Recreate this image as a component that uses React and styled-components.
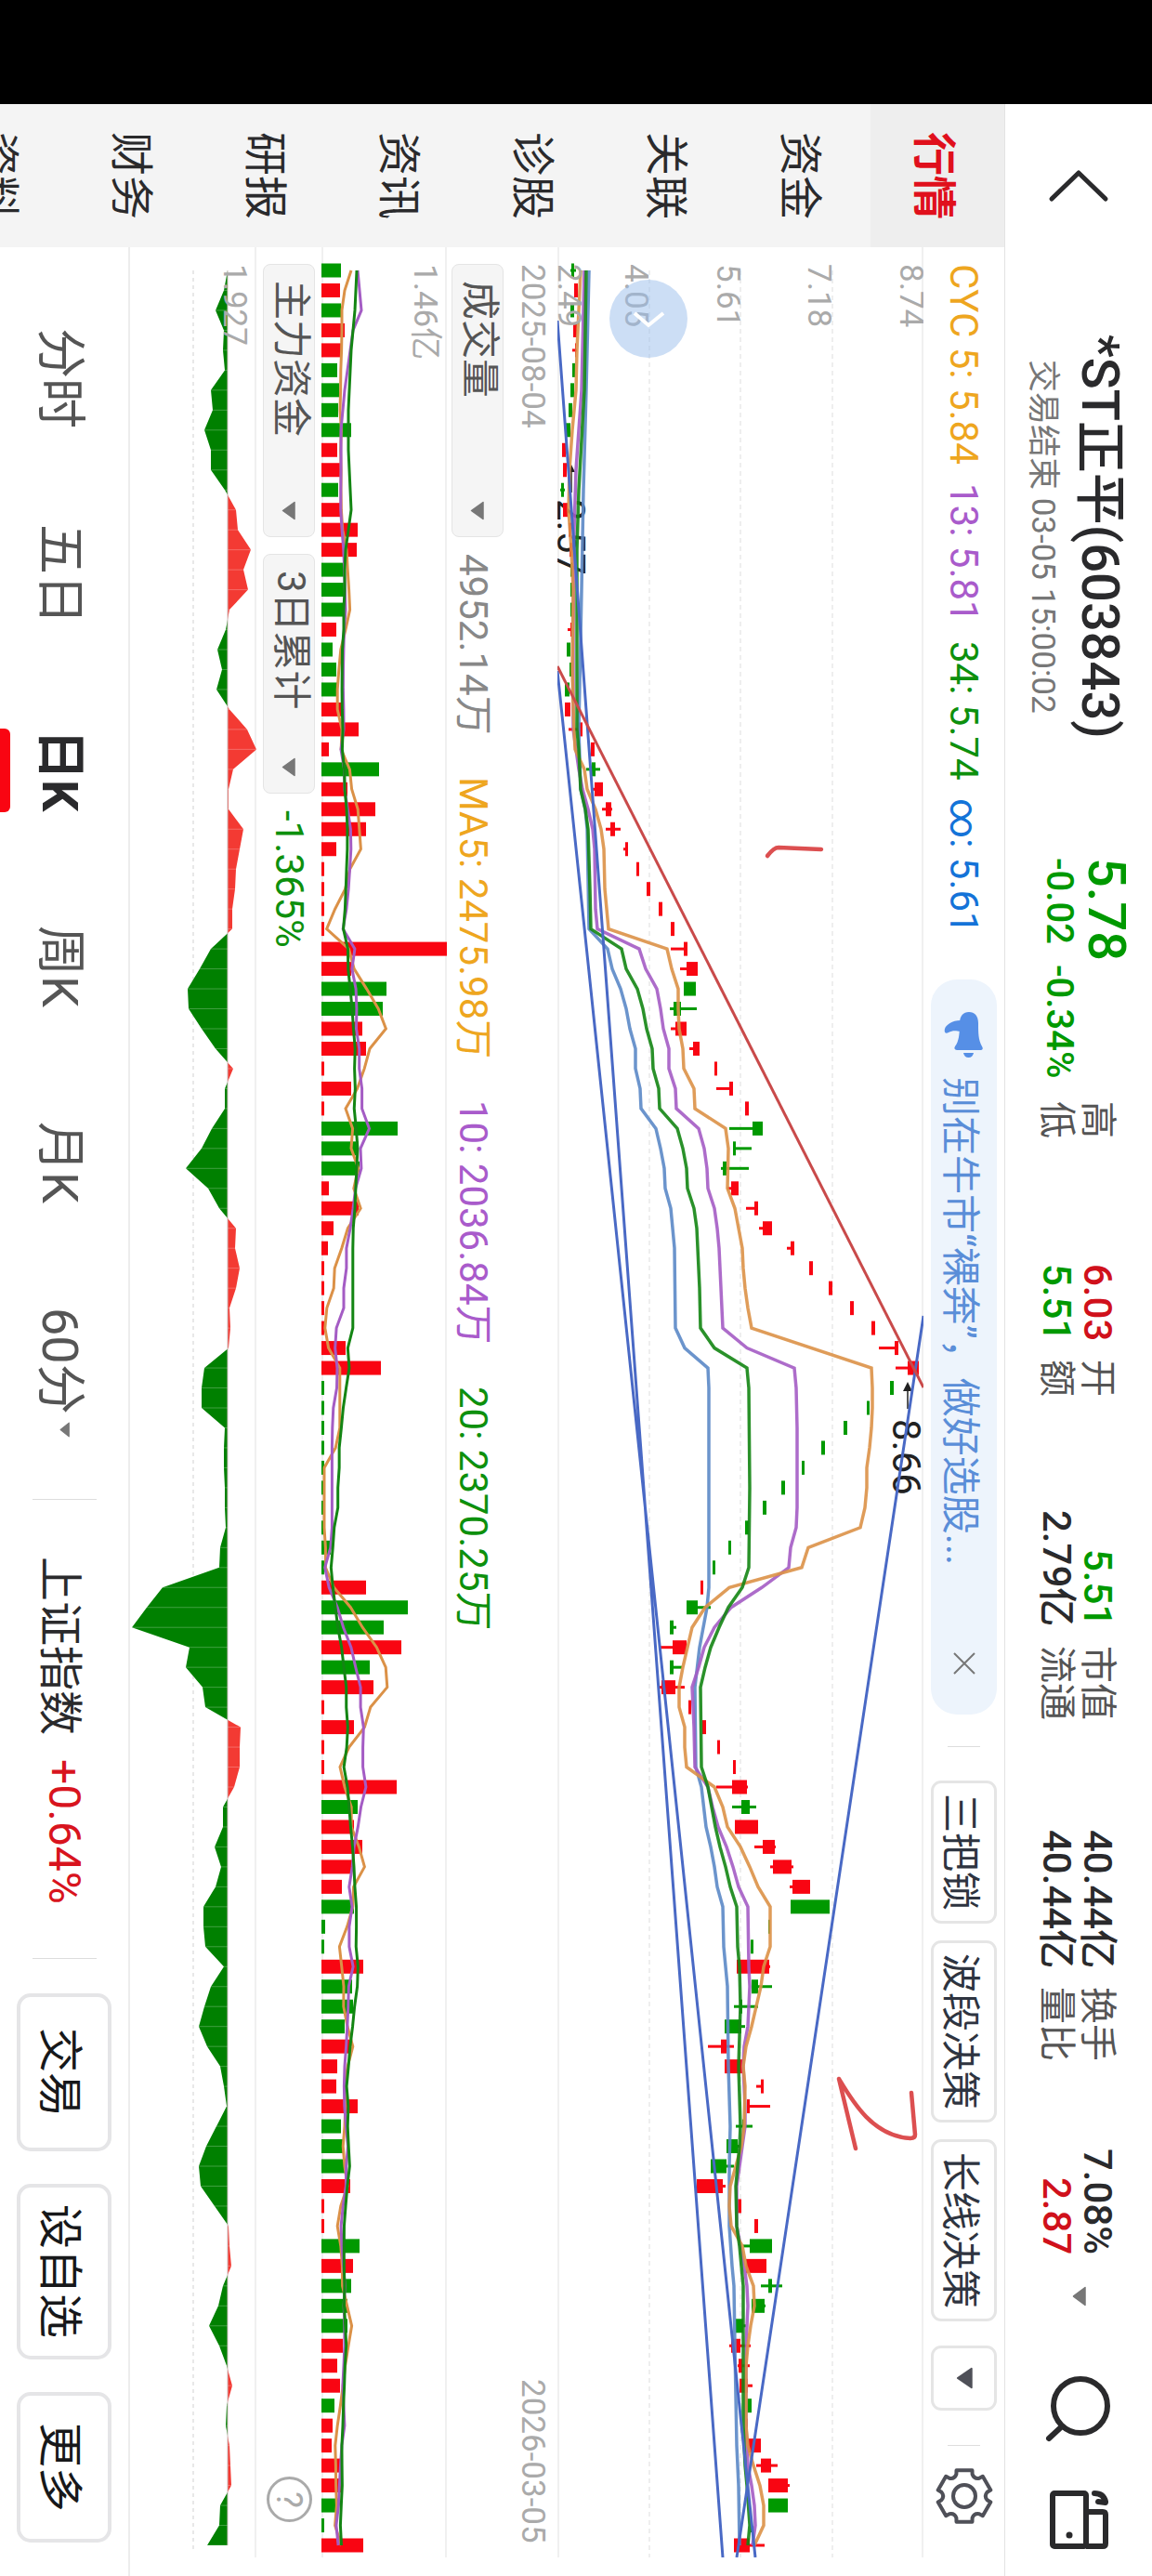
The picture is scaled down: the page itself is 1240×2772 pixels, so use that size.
import React from 'react'
import styled, { createGlobalStyle } from 'styled-components'

const GREEN = '#009900'
const RED = '#f90512'

const GlobalStyle = createGlobalStyle`
  * {
    box-sizing: border-box;
  }
  body {
    margin: 0;
    background: #fff;
    font-family: Roboto, 'Noto Sans CJK SC', sans-serif;
  }
  button, select {
    margin: 0;
    padding: 0;
    border: 0;
    background: none;
    color: inherit;
    font: inherit;
    writing-mode: inherit;
    text-orientation: inherit;
    white-space: nowrap;
    cursor: pointer;
  }
  svg {
    display: block;
    flex: none;
    writing-mode: horizontal-tb;
  }
`

// the phone is held sideways: inline runs down, block runs right to left
const Phone = styled.div`
  display: flex;
  writing-mode: vertical-rl;
  text-orientation: sideways;
  width: 100%;
  height: 100vh;
  overflow: hidden;
  white-space: nowrap;
  color: #2a2a2c;
`

const Notch = styled.div`
  flex: none;
  inline-size: 112px;
  background: #000;
`

const Screen = styled.div`
  flex: 1;
  min-inline-size: 0;
  display: flex;
  flex-direction: column;
`

const Header = styled.header`
  display: flex;
  align-items: center;
  flex: none;
  block-size: 159px;
  padding-inline-end: 28px;
  border-block-end: 1px solid #e3e3e3;
`

const BackButton = styled.button`
  display: flex;
  align-items: center;
  justify-content: center;
  inline-size: 176px;
  block-size: 100%;
`

const IconButton = styled.button`
  display: flex;
  align-items: center;
  flex: none;
  margin-inline-start: ${(p) => p.$gap || 0}px;
`

const Title = styled.div`
  margin-inline-start: 72px;
  padding-block-start: 10px;
  text-align: center;
`

const Name = styled.h1`
  margin: 0;
  font-size: 56px;
  font-weight: 500;
  line-height: 68px;
`

const Status = styled.div`
  font-size: 35px;
  line-height: 56px;
  color: #777;
`

const Price = styled.div`
  inline-size: 240px;
  margin-inline: 128px 22px;
  padding-block-end: 16px;
  color: ${GREEN};
  font-weight: 500;
`

const Last = styled.div`
  font-size: 56px;
  line-height: 58px;
`

const Change = styled.div`
  display: flex;
  gap: 22px;
  font-size: 40px;
  line-height: 44px;
`

const Stats = styled.dl`
  flex: 1;
  display: grid;
  grid-template-columns: 26fr 29fr 35fr 29fr;
  column-gap: 20px;
  margin: 0;
  padding-block-start: 4px;
`

const Stat = styled.div`
  display: flex;
  justify-content: space-between;
  line-height: 44px;
`

const StatLabel = styled.dt`
  font-size: 40px;
  color: #555;
`

const StatValue = styled.dd`
  margin: 0;
  font-size: 42px;
  font-weight: 500;
  color: ${(p) => p.$color || '#2a2a2c'};
`

const Body = styled.div`
  flex: 1;
  min-block-size: 0;
  display: flex;
`

const SideTabs = styled.nav`
  flex: none;
  display: flex;
  flex-direction: column;
  inline-size: 154px;
  overflow: hidden;
  background: #f4f4f4;
`

const SideTab = styled.button`
  flex: none;
  block-size: 144px;
  font-size: 47px;
  font-weight: ${(p) => (p.$active ? 700 : 400)};
  color: ${(p) => (p.$active ? '#e0101c' : '#2a2a2c')};
  background: ${(p) => (p.$active ? '#eee' : 'transparent')};
`

const Content = styled.main`
  flex: 1;
  min-inline-size: 0;
  display: flex;
  flex-direction: column;
`

const Bar = styled.div`
  flex: none;
  display: flex;
  align-items: center;
  block-size: ${(p) => p.$size}px;
  padding-inline: 18px ${(p) => p.$end || 20}px;
  font-size: 42px;
`

const Legend = styled.div`
  display: flex;
  gap: 20px;
`

const Tinted = styled.span`
  color: ${(p) => p.$color};
`

const Notice = styled.div`
  display: flex;
  align-items: center;
  inline-size: 791px;
  block-size: 71px;
  margin-inline-start: auto;
  padding-inline: 35px 42px;
  border-radius: 28px;
  background: #edf4fc;
  color: #5a8ed8;
`

const NoticeText = styled.span`
  flex: 1;
  margin-inline-start: 20px;
`

const Divider = styled.span`
  flex: none;
  inline-size: 1px;
  block-size: ${(p) => p.$size}px;
  margin-inline: ${(p) => p.$before}px ${(p) => p.$after}px;
  background: #ddd;
`

const Chip = styled.button`
  flex: none;
  display: flex;
  align-items: center;
  justify-content: center;
  block-size: 71px;
  min-inline-size: 70px;
  margin-inline: ${(p) => p.$gap || 0}px 18px;
  padding-inline: 11px;
  border: 3px solid #e5e5e5;
  border-radius: 11px;
  color: #2e3440;
`

const ChartPane = styled.section`
  ${(p) => (p.$size ? `flex: none; block-size: ${p.$size}px;` : 'flex: 1; min-block-size: 0;')}
  margin-inline-end: 20px;
  box-shadow: inset -2px 0 #f0f0f0${(p) => (p.$last ? '' : ', inset 2px 0 #f0f0f0')};
  svg {
    width: 100%;
    height: 100%;
  }
`

const DateRow = styled.div`
  flex: none;
  display: flex;
  justify-content: space-between;
  align-items: center;
  block-size: 54px;
  padding-inline: 18px 35px;
  font-size: 35px;
  color: #aaa;
`

const SelectBox = styled.label`
  position: relative;
  display: block;
  flex: none;
  inline-size: ${(p) => p.$length}px;
  block-size: 56px;
  margin-inline-end: 18px;
  select {
    appearance: none;
    inline-size: 100%;
    block-size: 100%;
    padding-inline: 17px 40px;
    border: 1px solid #e4e4e4;
    border-radius: 8px;
    background: #f5f5f5;
    color: #555;
  }
  svg {
    position: absolute;
    bottom: 18px;
    left: 20px;
    pointer-events: none;
  }
`

const Averages = styled.div`
  display: flex;
  gap: 45px;
`

const HelpButton = styled.button`
  margin-inline: auto 38px;
  inline-size: 49px;
  block-size: 49px;
  border: 3px solid #aaa;
  border-radius: 50%;
  color: #aaa;
  font-size: 38px;
  line-height: 42px;
`

const BottomBar = styled.footer`
  flex: none;
  display: flex;
  align-items: center;
  block-size: 140px;
  padding-inline: 86px 35px;
  border-block-start: 2px solid #ededed;
  font-size: 54px;
`

const Periods = styled.nav`
  display: flex;
  gap: 101px;
  block-size: 100%;
`

const Period = styled.button`
  position: relative;
  display: flex;
  align-items: center;
  justify-content: center;
  gap: 8px;
  min-inline-size: 110px;
  color: ${(p) => (p.$active ? '#2a2a2c' : '#555')};
  font-weight: ${(p) => (p.$active ? 700 : 400)};
  &::after {
    content: '';
    display: ${(p) => (p.$active ? 'block' : 'none')};
    position: absolute;
    inset-inline: 10px;
    inset-block-end: 0;
    block-size: 11px;
    border-radius: 0 6px 6px 0;
    background: ${RED};
  }
`

const Index = styled.div`
  display: flex;
  align-items: center;
  gap: 26px;
  font-size: 48px;
`

const ActionButton = styled.button`
  flex: none;
  inline-size: ${(p) => p.$length}px;
  block-size: 102px;
  border: 4px solid #e5e5e7;
  border-radius: 15px;
  font-size: 48px;
  color: #17181a;
`

const Actions = styled.div`
  flex: none;
  display: flex;
  gap: 35px;
`

// ---------- icons ----------

const Caret = ({ width = 15, height = 21, color = '#777' }) => (
  <svg width={width} height={height} viewBox="0 0 15 21" preserveAspectRatio="none">
    <path d="M14 1.5V19.5L1.5 10.5Z" fill={color} stroke={color} strokeWidth="1.5" strokeLinejoin="round" />
  </svg>
)

const BackIcon = () => (
  <svg width="66" height="36" viewBox="0 0 66 36" fill="none" stroke="#2a2a2c">
    <path d="M4 32L33 4L62 32" strokeWidth="5" strokeLinecap="round" strokeLinejoin="round" />
  </svg>
)

const SearchIcon = () => (
  <svg width="72" height="76" viewBox="0 0 72 76" fill="none" stroke="#2a2a2c" strokeWidth="6">
    <circle cx="38" cy="34" r="29" />
    <path d="M18 56L4 69" strokeLinecap="round" />
  </svg>
)

const WindowIcon = () => (
  <svg width="63" height="65" viewBox="0 0 63 65" fill="none" stroke="#2a2a2c" strokeWidth="6">
    <rect x="3" y="4" width="36" height="57" rx="2" />
    <path d="M39 24H57Q60 24 60 27V58Q60 61 57 61H39" />
    <path d="M48 4Q58 4 60 13M52 13L60 14" strokeLinecap="round" />
    <circle cx="21" cy="49" r="3.5" fill="#2a2a2c" stroke="none" />
  </svg>
)

const BellIcon = () => (
  <svg width="43" height="50" viewBox="0 0 43 50" fill="#568fe6">
    <path d="M17 12C17 4 21 0 27 0S37 4 37 12C37 22 37 30 41 37Q43 40 40 41H14Q10 40 12 37C16 32 17 24 17 12Z" />
    <path d="M18 9C9 9 2 14 1 18C0 22 2 24 5 22C9 20 12 20 18 21Z" />
    <path d="M21 44H32Q31 49 26.500 49T21 44Z" />
  </svg>
)

const CloseIcon = () => (
  <svg width="26" height="26" viewBox="0 0 26 26" stroke="#777" strokeWidth="2">
    <path d="M2 2L24 24M24 2L2 24" />
  </svg>
)

const polar = (r, deg) => {
  const a = (deg * Math.PI) / 180
  return `${(31 + r * Math.cos(a)).toFixed(1)} ${(31 + r * Math.sin(a)).toFixed(1)}`
}

const gear = [0, 1, 2, 3, 4, 5]
  .map((k) => {
    const a = k * 60 - 90
    return [
      `${k ? 'L' : 'M'}${polar(29, a - 17)}`,
      `L${polar(29, a + 17)}`,
      `L${polar(25, a + 20)}`,
      `Q${polar(21, a + 30)} ${polar(25, a + 40)}`
    ].join('')
  })
  .join('')

const GearIcon = () => (
  <svg width="62" height="62" viewBox="0 0 62 62" fill="none" stroke="#4f5058" strokeWidth="4" strokeLinejoin="round">
    <path d={`${gear}Z`} />
    <circle cx="31" cy="31" r="12" />
  </svg>
)

// ---------- chart data ----------

const STEP = 2448 / 114
const at = (i) => 291 + i * STEP

// body start, body end, wick start, wick end
const candles = [
  ['G', 615, 618, 614, 620], ['R', 618, 622], ['G', 614, 618], ['R', 617, 621], ['R', 619, 620, 616, 621],
  ['G', 616, 619], ['G', 614, 618], ['G', 612, 616], ['G', 608, 614], ['R', 605, 609],
  ['R', 606, 610], ['G', 604, 607, 603, 608], ['R', 606, 611], ['R', 612, 615], ['R', 613, 616],
  ['G', 614, 617], ['G', 614, 617], ['G', 614, 617], ['R', 614, 615, 611, 616], ['G', 610, 614],
  ['G', 613, 616], ['G', 608, 613], ['R', 608, 614], ['R', 623, 627, 612, 627], ['R', 636, 640],
  ['G', 637, 641, 631, 646], ['R', 640, 649, 638, 649], ['R', 652, 658, 648, 659], ['R', 657, 662, 652, 668], ['R', 673, 676, 671, 676],
  ['R', 685, 688], ['R', 696, 700], ['R', 709, 713], ['R', 722, 726], ['R', 736, 740, 722, 740],
  ['R', 739, 751, 732, 751], ['G', 736, 749], ['G', 725, 733, 721, 750], ['R', 727, 739, 722, 739], ['R', 746, 753, 742, 753],
  ['R', 769, 772], ['R', 785, 789, 771, 789], ['R', 802, 806], ['G', 810, 821, 785, 821], ['G', 789, 792, 789, 809],
  ['G', 778, 782, 776, 806], ['R', 787, 795, 783, 795], ['R', 812, 816, 803, 816], ['R', 821, 831, 817, 831], ['R', 851, 855, 847, 855],
  ['R', 871, 875], ['R', 892, 896], ['R', 915, 919], ['R', 938, 942], ['R', 963, 967, 946, 967],
  ['R', 977, 989, 964, 989], ['G', 958, 962], ['G', 933, 936], ['G', 908, 912], ['G', 884, 888],
  ['G', 863, 866], ['G', 841, 845], ['G', 821, 825], ['G', 802, 806], ['G', 784, 787],
  ['G', 767, 770], ['R', 754, 757], ['G', 739, 751, 739, 765], ['G', 721, 725, 721, 728], ['R', 724, 739, 711, 739],
  ['G', 721, 725, 721, 734], ['R', 712, 727, 710, 737], ['R', 741, 744], ['R', 756, 760], ['R', 772, 775],
  ['R', 789, 792], ['R', 788, 804, 771, 805], ['G', 798, 807, 788, 814], ['R', 791, 816], ['R', 821, 834, 812, 835],
  ['R', 832, 852, 829, 854], ['R', 853, 872, 850, 872], ['G', 851, 893], ['G', 827, 829], ['G', 808, 811],
  ['R', 793, 828, 793, 829], ['G', 809, 816, 809, 831], ['G', 796, 799, 790, 816], ['G', 780, 798, 780, 802], ['R', 776, 782, 762, 790],
  ['R', 780, 800], ['R', 819, 822, 814, 822], ['R', 804, 807, 804, 829], ['G', 799, 801, 792, 810], ['G', 782, 794, 782, 796],
  ['G', 765, 782, 765, 790], ['R', 750, 778, 750, 781], ['R', 794, 798], ['R', 812, 816], ['G', 807, 831, 800, 831],
  ['R', 803, 825], ['G', 827, 831, 819, 842], ['G', 809, 823, 809, 824], ['G', 792, 800, 792, 803], ['R', 787, 797, 785, 808],
  ['R', 795, 799, 794, 807], ['R', 796, 805, 796, 810], ['G', 803, 809], ['R', 803, 805], ['R', 805, 819],
  ['R', 819, 830, 814, 837], ['R', 827, 848, 827, 850], ['G', 827, 848], ['G', 808, 810], ['R', 790, 807, 790, 823]
]

// day index, position
const costLines = [
  {
    color: '#5b88c7',
    points: [[0, 634], [6, 631], [11, 628], [16, 626], [23, 623], [26, 625], [27, 630], [28, 632], [33, 634], [34, 654], [35, 659], [36, 668], [37, 674], [38, 678], [39, 684], [40, 684], [41, 689], [42, 690], [43, 706], [44, 711], [45, 715], [46, 716], [47, 722], [48, 724], [49, 726], [53, 727], [54, 737], [55, 762], [56, 763], [66, 763], [67, 761], [69, 753], [71, 748], [75, 749], [76, 755], [78, 760], [79, 765], [80, 769], [81, 772], [82, 778], [84, 779], [86, 783], [90, 784], [93, 786], [95, 785], [98, 785], [100, 788], [101, 790], [104, 791], [109, 793], [111, 795], [114, 796]]
  },
  {
    color: '#a45cc4',
    points: [[0, 629], [6, 626], [10, 620], [13, 618], [18, 617], [23, 617], [24, 620], [25, 623], [26, 627], [27, 633], [28, 638], [29, 640], [32, 641], [33, 643], [34, 688], [35, 695], [36, 707], [37, 711], [38, 714], [39, 720], [40, 720], [41, 727], [42, 728], [43, 752], [44, 758], [45, 761], [46, 762], [47, 769], [48, 772], [49, 774], [51, 776], [53, 778], [54, 804], [55, 855], [56, 857], [58, 858], [62, 858], [63, 857], [64, 851], [65, 849], [66, 820], [67, 787], [68, 769], [69, 758], [70, 752], [71, 745], [73, 747], [75, 748], [76, 762], [77, 767], [78, 773], [79, 782], [80, 789], [81, 795], [82, 805], [85, 806], [86, 807], [88, 805], [89, 801], [90, 800], [92, 802], [93, 802], [94, 799], [95, 796], [96, 793], [98, 793], [99, 797], [100, 801], [101, 804], [102, 805], [104, 803], [108, 803], [110, 805], [111, 809], [112, 812], [113, 813], [114, 810]]
  },
  {
    color: '#db9147',
    points: [[0, 625], [4, 621], [6, 620], [8, 616], [10, 613], [12, 612], [14, 615], [16, 617], [20, 616], [22, 617], [24, 619], [25, 629], [26, 632], [27, 641], [28, 647], [29, 650], [31, 651], [32, 653], [33, 655], [34, 718], [35, 723], [36, 730], [37, 730], [38, 731], [39, 735], [40, 736], [41, 747], [42, 748], [43, 781], [44, 784], [46, 783], [47, 791], [48, 795], [49, 799], [50, 800], [51, 802], [52, 805], [53, 809], [55, 938], [56, 939], [57, 939], [58, 938], [59, 936], [60, 933], [61, 933], [62, 931], [63, 926], [64, 870], [65, 863], [66, 785], [67, 759], [68, 745], [69, 740], [70, 735], [71, 731], [72, 731], [73, 737], [74, 737], [75, 739], [76, 769], [77, 778], [78, 783], [79, 797], [80, 807], [81, 816], [82, 829], [84, 829], [85, 822], [86, 819], [87, 814], [88, 809], [89, 803], [90, 800], [91, 802], [93, 801], [94, 798], [95, 792], [96, 786], [97, 785], [98, 787], [99, 799], [100, 803], [101, 811], [102, 812], [103, 808], [104, 805], [105, 803], [108, 803], [109, 805], [110, 811], [111, 818], [112, 822], [113, 822], [114, 812]]
  },
  {
    color: '#138513',
    points: [[0, 631], [6, 629], [11, 623], [14, 621], [23, 621], [24, 623], [26, 625], [27, 630], [28, 633], [31, 635], [33, 636], [34, 669], [35, 674], [36, 686], [37, 692], [38, 696], [39, 702], [40, 703], [41, 709], [42, 710], [43, 729], [44, 735], [45, 739], [46, 740], [47, 747], [48, 750], [49, 751], [51, 753], [53, 754], [54, 769], [55, 804], [56, 806], [61, 807], [65, 806], [66, 799], [67, 784], [68, 774], [69, 765], [70, 759], [71, 754], [75, 755], [76, 762], [77, 766], [78, 770], [79, 775], [80, 781], [81, 786], [82, 793], [84, 794], [85, 796], [87, 797], [90, 795], [93, 797], [94, 796], [95, 794], [96, 792], [98, 793], [99, 796], [101, 800], [108, 800], [110, 802], [111, 804], [113, 807], [114, 805]]
  }
]

const volumes = [
  21, 20, 21, 25, 21, 17, 19, 18, 32, 17, 20, 18, 20, 39, 38, 26, 25, 25, 16, 12,
  16, 17, 25, 40, 8, 62, 28, 58, 48, 16, 3, 3, 3, 3, 135, 32, 70, 66, 44, 48,
  3, 32, 3, 82, 40, 41, 8, 40, 13, 7, 3, 3, 3, 3, 26, 64, 3, 3, 3, 3,
  3, 3, 3, 3, 10, 3, 48, 93, 67, 86, 52, 56, 3, 35, 3, 3, 81, 39, 35, 44,
  33, 22, 35, 4, 3, 45, 33, 34, 25, 32, 17, 16, 39, 21, 23, 26, 31, 3, 3, 41,
  34, 32, 28, 28, 23, 17, 20, 14, 12, 11, 20, 21, 18, 3, 45
]

// leading values stand in for the days before the first bar
const averages = [
  { color: '#db9147', days: 5, seed: [32, 25, 22, 22] },
  { color: '#a45cc4', days: 10, seed: [39, 41, 43, 34, 31, 28, 25, 23, 21] },
  { color: '#138513', days: 20, seed: [38, 37, 36, 34, 32, 31, 30, 29, 29, 29, 30, 31, 32, 29, 26, 25, 25, 24, 24] }
]

const funds = [
  0, -4, -13, -4, -5, -3, -18, -16, -25, -18, -18, -3, 9, 11, 25, 17, 22, 2, -2, -11,
  -6, -12, 2, 21, 31, 6, 1, 1, 17, 13, 9, 8, 5, 5, -18, -30, -43, -42, -28, -13,
  6, -3, -3, -17, -28, -45, -21, -9, 9, 8, 13, 9, 2, 3, 1, -25, -28, -28, -3, -4,
  -4, -3, -3, -2, -8, -9, -70, -87, -103, -41, -45, -27, -24, 14, 13, 13, 7, -5, -5, -14,
  -7, -13, -26, -26, -24, -4, -18, -25, -31, -22, -8, -4, -1, -12, -23, -31, -29, -14, 1, 2,
  4, -5, -10, -20, -9, -1, 5, -1, -2, 2, 3, 4, -8, -9, -22
]

const toPoints = (points) => points.map(([i, x]) => `${x},${at(i).toFixed(1)}`).join(' ')

const average = (days, seed) =>
  volumes.map((_, i) => {
    if (i < seed.length) return [i, 346 + seed[i]]
    const part = volumes.slice(i - days + 1, i + 1)
    return [i, 346 + part.reduce((a, b) => a + b, 0) / days]
  })

const ChartLabel = ({ x, y = 284, size = 35, color = '#aaa', children }) => (
  <text transform={`translate(${x} ${y}) rotate(90)`} fontSize={size} fill={color}>
    {children}
  </text>
)

function PriceChart() {
  return (
    <svg viewBox="600 266 394 2486" preserveAspectRatio="none">
      {[699, 797, 896].map((x) => (
        <line key={x} x1={x} x2={x} y1="291" y2="2752" stroke="#eee" strokeWidth="2" strokeDasharray="5 4" />
      ))}
      <ChartLabel x={600} y={537} size={42} color="#222">2.57</ChartLabel>
      <ChartLabel x={961} y={1527} size={42} color="#222">8.66</ChartLabel>
      <path d="M615 530V504M977 1516V1490" stroke="#222" strokeWidth="1.5" />
      <path d="M615 500L611 508H619ZM977 1487L972 1497H982Z" fill="#222" />
      {candles.map(([kind, from, to, low = from, high = to], i) => (
        <g key={i} fill={kind === 'R' ? RED : GREEN}>
          <rect x={low} y={at(i) - 1.5} width={high - low} height="3" />
          <rect x={from} y={at(i) - 7.5} width={to - from} height="15" />
        </g>
      ))}
      {costLines.map((line) => (
        <polyline key={line.color} points={toPoints(line.points)} fill="none" stroke={line.color} strokeWidth="3.500" strokeOpacity="0.9" />
      ))}
      <ChartLabel x={969}>8.74</ChartLabel>
      <ChartLabel x={870}>7.18</ChartLabel>
      <ChartLabel x={772}>5.61</ChartLabel>
      <ChartLabel x={673}>4.05</ChartLabel>
      <ChartLabel x={601}>2.49</ChartLabel>
      <path d="M600 345L778 2752M600 722L813 2752M994 1416L793 2752" stroke="#4969c5" strokeWidth="3" />
      <path d="M600 717L994 1493" stroke="#c94a4a" strokeWidth="3" />
      <g fill="none" stroke="#dc4f50" strokeWidth="4.500" strokeLinecap="round" strokeLinejoin="round">
        <path d="M826 921Q833 912 838 912L884 914" />
        <path d="M921 2312L903 2237C918 2262 940 2299 980 2301Q985 2301 985 2297L981 2252" />
      </g>
      <circle cx="698" cy="343" r="42" fill="#9abdec" fillOpacity="0.5" />
      <path d="M683 337L698 350L714 337" fill="none" stroke="#fff" strokeWidth="4" />
    </svg>
  )
}

function VolumeChart() {
  return (
    <svg viewBox="346 266 135 2486" preserveAspectRatio="none">
      {volumes.map((v, i) => (
        <rect key={i} x="346" y={at(i) - 7.5} width={v} height="15" fill={candles[i][0] === 'R' ? RED : GREEN} />
      ))}
      {averages.map(({ color, days, seed }) => (
        <polyline key={days} points={toPoints(average(days, seed))} fill="none" stroke={color} strokeWidth="3" />
      ))}
      <ChartLabel x={446}>1.46亿</ChartLabel>
    </svg>
  )
}

function FundChart() {
  const line = toPoints(funds.map((v, i) => [i, 245 + v]))
  const area = `245,${at(0)} ${line} 245,${at(114)}`
  return (
    <svg viewBox="140 266 136 2486" preserveAspectRatio="none">
      <clipPath id="outflow">
        <rect x="140" y="266" width="105" height="2486" />
      </clipPath>
      <clipPath id="inflow">
        <rect x="245" y="266" width="40" height="2486" />
      </clipPath>
      <line x1="208" x2="208" y1="291" y2="2745" stroke="#e8e8e8" strokeWidth="2" strokeDasharray="4 4" />
      <polygon points={area} fill="#008000" clipPath="url(#outflow)" />
      <polygon points={area} fill="#f33a33" clipPath="url(#inflow)" />
      {funds.map((v, i) => (
        <line key={i} x1="245" x2={245 + v} y1={at(i)} y2={at(i)} stroke="#fff" strokeOpacity="0.25" />
      ))}
      <line x1="245" x2="245" y1="291" y2="2739" stroke="#cdbcbc" />
      <ChartLabel x={241}>1.927</ChartLabel>
    </svg>
  )
}

// ---------- page ----------

const stats = [
  [['高', '6.03', '#d0111b'], ['低', '5.51', GREEN]],
  [['开', '5.51', GREEN], ['额', '2.79亿']],
  [['市值', '40.44亿'], ['流通', '40.44亿']],
  [['换手', '7.08%'], ['量比', '2.87', '#d0111b']]
]

const tabs = ['行情', '资金', '关联', '诊股', '资讯', '研报', '财务', '资料']
const periods = ['分时', '五日', '日K', '周K', '月K', '60分']

const Dropdown = ({ name, value, length }) => (
  <SelectBox $length={length}>
    <select aria-label={name} defaultValue={value}>
      <option>{value}</option>
    </select>
    <Caret />
  </SelectBox>
)

function App() {
  return (
    <>
      <GlobalStyle />
      <Phone>
        <Notch />
        <Screen>
          <Header>
            <BackButton aria-label="返回">
              <BackIcon />
            </BackButton>
            <Title>
              <Name>*ST正平(603843)</Name>
              <Status>交易结束 03-05 15:00:02</Status>
            </Title>
            <Price>
              <Last>5.78</Last>
              <Change>
                <span>-0.02</span>
                <span>-0.34%</span>
              </Change>
            </Price>
            <Stats>
              {stats.map((pair, i) => (
                <div key={`stat-${i}`}>
                  {pair.map(([label, value, color]) => (
                    <Stat key={label}>
                      <StatLabel>{label}</StatLabel>
                      <StatValue $color={color}>{value}</StatValue>
                    </Stat>
                  ))}
                </div>
              ))}
            </Stats>
            <IconButton $gap={34} aria-label="展开">
              <Caret height={22} />
            </IconButton>
            <IconButton $gap={73} aria-label="搜索">
              <SearchIcon />
            </IconButton>
            <IconButton $gap={48} aria-label="小窗">
              <WindowIcon />
            </IconButton>
          </Header>
          <Body>
            <SideTabs>
              {tabs.map((tab, i) => (
                <SideTab key={tab} $active={i === 0}>
                  {tab}
                </SideTab>
              ))}
            </SideTabs>
            <Content>
              <Bar $size={87} $end={55}>
                <Legend>
                  <Tinted $color="#eea61f">CYC 5: 5.84</Tinted>
                  <Tinted $color="#a95bcb">13: 5.81</Tinted>
                  <Tinted $color="#0d900d">34: 5.74</Tinted>
                  <Tinted $color="#1473d8">∞: 5.61</Tinted>
                </Legend>
                <Notice>
                  <BellIcon />
                  <NoticeText>别在牛市“裸奔”，做好选股...</NoticeText>
                  <IconButton aria-label="关闭">
                    <CloseIcon />
                  </IconButton>
                </Notice>
                <Divider $size={35} $before={34} $after={36} />
                <Chip>三把锁</Chip>
                <Chip>波段决策</Chip>
                <Chip>长线决策</Chip>
                <Chip $gap={8} aria-label="更多指标">
                  <Caret width={18} height={24} color="#4f5058" />
                </Chip>
                <Divider $size={35} $before={19} $after={23} />
                <IconButton aria-label="设置">
                  <GearIcon />
                </IconButton>
              </Bar>
              <ChartPane>
                <PriceChart />
              </ChartPane>
              <DateRow>
                <span>2025-08-04</span>
                <span>2026-03-05</span>
              </DateRow>
              <Bar $size={65}>
                <Dropdown name="指标一" value="成交量" length={294} />
                <Averages>
                  <Tinted $color="#888">4952.14万</Tinted>
                  <Tinted $color="#eea61f">MA5: 2475.98万</Tinted>
                  <Tinted $color="#a95bcb">10: 2036.84万</Tinted>
                  <Tinted $color="#0d900d">20: 2370.25万</Tinted>
                </Averages>
              </Bar>
              <ChartPane $size={135}>
                <VolumeChart />
              </ChartPane>
              <Bar $size={70}>
                <Dropdown name="指标二" value="主力资金" length={294} />
                <Dropdown name="周期" value="3日累计" length={258} />
                <Tinted $color="#0d900d">-1.365%</Tinted>
                <HelpButton aria-label="帮助">?</HelpButton>
              </Bar>
              <ChartPane $size={136} $last>
                <FundChart />
              </ChartPane>
              <BottomBar>
                <Periods>
                  {periods.map((period) => (
                    <Period key={period} $active={period === '日K'}>
                      {period}
                      {period === '60分' && <Caret width={11} height={17} />}
                    </Period>
                  ))}
                </Periods>
                <Divider $size={69} $before={66} $after={61} />
                <Index>
                  <span>上证指数</span>
                  <Tinted $color="#d8141e">+0.64%</Tinted>
                </Index>
                <Divider $size={69} $before={58} $after={37} />
                <Actions>
                  <ActionButton $length={170}>交易</ActionButton>
                  <ActionButton $length={189}>设自选</ActionButton>
                  <ActionButton $length={162}>更多</ActionButton>
                </Actions>
              </BottomBar>
            </Content>
          </Body>
        </Screen>
      </Phone>
    </>
  )
}

export default App
